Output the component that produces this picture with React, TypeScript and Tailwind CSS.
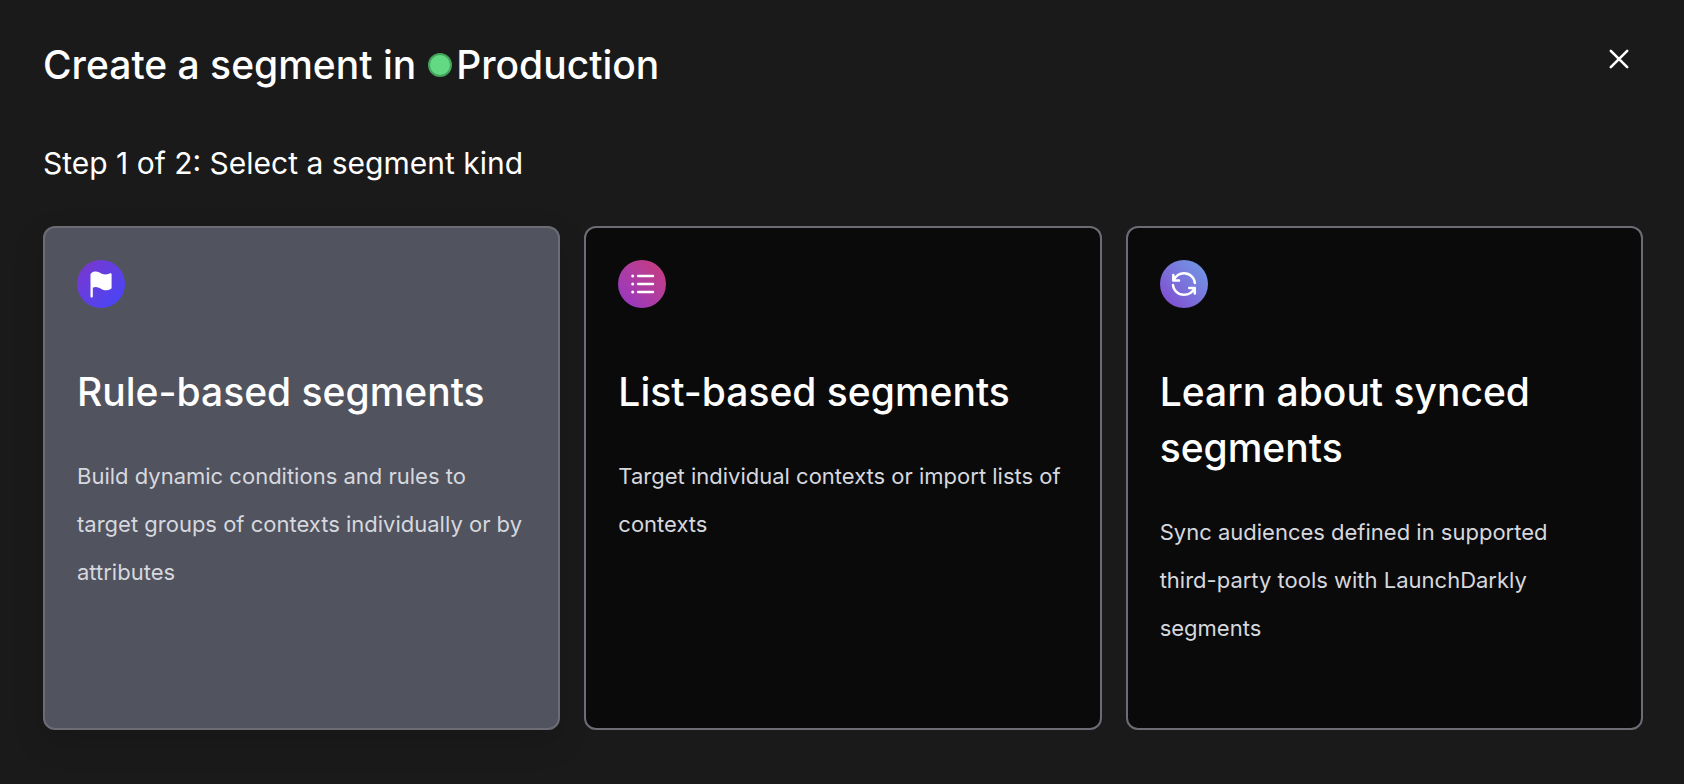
import type { ReactNode } from "react";

interface SegmentKind {
  id: string;
  title: string;
  description: string;
  iconClass: string;
  icon: ReactNode;
  selected?: boolean;
}

function FlagIcon() {
  return (
    <svg className="size-12" viewBox="0 0 48 48" fill="none" aria-hidden>
      <path
        d="M14.2 13.2C18.6 10 22 12.4 24.8 13.7C28.4 15.2 31.2 14.2 33 13.3C33.8 12.9 34.6 13.4 34.6 14.3V27.8C34.6 28.4 34.3 28.8 33.8 29.1C31.2 30.5 28.4 30.9 25.2 29.4C22.2 28 19.2 26.1 15.8 27.7V36.4C15.8 37.1 15.3 37.6 14.7 37.6C14 37.6 13.5 37.1 13.5 36.4V14.5C13.5 14 13.7 13.5 14.2 13.2Z"
        fill="currentColor"
      />
    </svg>
  );
}

function ListIcon() {
  return (
    <svg className="size-12" viewBox="0 0 48 48" fill="none" aria-hidden>
      <path
        d="M20 16H35M20 24H35M20 32H35"
        stroke="currentColor"
        strokeWidth={2.4}
        strokeLinecap="round"
      />
      <circle cx="14.7" cy="16" r="1.5" fill="currentColor" />
      <circle cx="14.7" cy="24" r="1.5" fill="currentColor" />
      <circle cx="14.7" cy="32" r="1.5" fill="currentColor" />
    </svg>
  );
}

function SyncIcon() {
  return (
    <svg
      className="size-12"
      viewBox="0 0 48 48"
      fill="none"
      stroke="currentColor"
      strokeWidth={2.5}
      strokeLinecap="round"
      strokeLinejoin="round"
      aria-hidden
    >
      <path d="M13.3 15V20.4H19M13.6 20.2C15.6 16 19.4 13.2 24 13.2C30 13.2 34.4 17.6 34.8 23" />
      <path d="M34.8 33.4V28H29.2M34.5 28.2C32.5 32.2 28.6 34.8 24 34.8C18 34.8 13.4 30.4 13 25" />
    </svg>
  );
}

const SEGMENT_KINDS: SegmentKind[] = [
  {
    id: "rule",
    title: "Rule-based segments",
    description:
      "Build dynamic conditions and rules to target groups of contexts individually or by attributes",
    iconClass: "bg-linear-to-br from-[#7a35cc] to-[#3f45fa]",
    icon: <FlagIcon />,
    selected: true,
  },
  {
    id: "list",
    title: "List-based segments",
    description: "Target individual contexts or import lists of contexts",
    iconClass: "bg-linear-to-tr from-[#9333c8] to-[#cb3878]",
    icon: <ListIcon />,
  },
  {
    id: "synced",
    title: "Learn about synced segments",
    description:
      "Sync audiences defined in supported third-party tools with LaunchDarkly segments",
    iconClass: "bg-linear-to-tr from-[#7f42cf] to-[#6b9ee6]",
    icon: <SyncIcon />,
  },
];

function SegmentCard({ kind }: { kind: SegmentKind }) {
  return (
    <button
      type="button"
      aria-pressed={Boolean(kind.selected)}
      className={`flex flex-1 basis-0 flex-col items-start rounded-xl border-2 border-[#6c6c75] px-8 pt-8 pb-[76px] text-left ${
        kind.selected ? "bg-[#51535f] shadow-[0_12px_32px_rgba(0,0,0,0.13)]" : "bg-[#0a0a0a]"
      }`}
    >
      <span className={`size-12 rounded-full text-white ${kind.iconClass}`}>{kind.icon}</span>
      <span className="mt-14 text-[39px] leading-14 font-medium text-white">{kind.title}</span>
      <span className="mt-8 text-[22px] leading-12 text-[#d6d8de]">{kind.description}</span>
    </button>
  );
}

export default function App() {
  return (
    <main className="min-h-screen bg-[#1a1a1a] pt-[37px] pr-[41px] pb-12 pl-[43px] font-['Inter',sans-serif] text-white">
      <header className="flex items-start justify-between">
        <h1 className="flex items-center text-[39px] leading-14 font-medium">
          Create a segment in
          <span className="mr-1 ml-3 size-6 rounded-full border-2 border-[#45a35c] bg-[#62d983]" />
          Production
        </h1>
        <button type="button" aria-label="Close" className="mt-[2px] mr-1 p-1">
          <svg
            className="size-8"
            viewBox="0 0 32 32"
            fill="none"
            stroke="currentColor"
            strokeWidth={2.6}
            strokeLinecap="round"
            aria-hidden
          >
            <path d="M7.8 7.8L24.2 24.2M24.2 7.8L7.8 24.2" />
          </svg>
        </button>
      </header>

      <h2 className="mt-[50px] text-[30px] leading-10">Step 1 of 2: Select a segment kind</h2>

      <div className="mt-[43px] flex items-stretch gap-6">
        {SEGMENT_KINDS.map((kind) => (
          <SegmentCard key={kind.id} kind={kind} />
        ))}
      </div>
    </main>
  );
}
